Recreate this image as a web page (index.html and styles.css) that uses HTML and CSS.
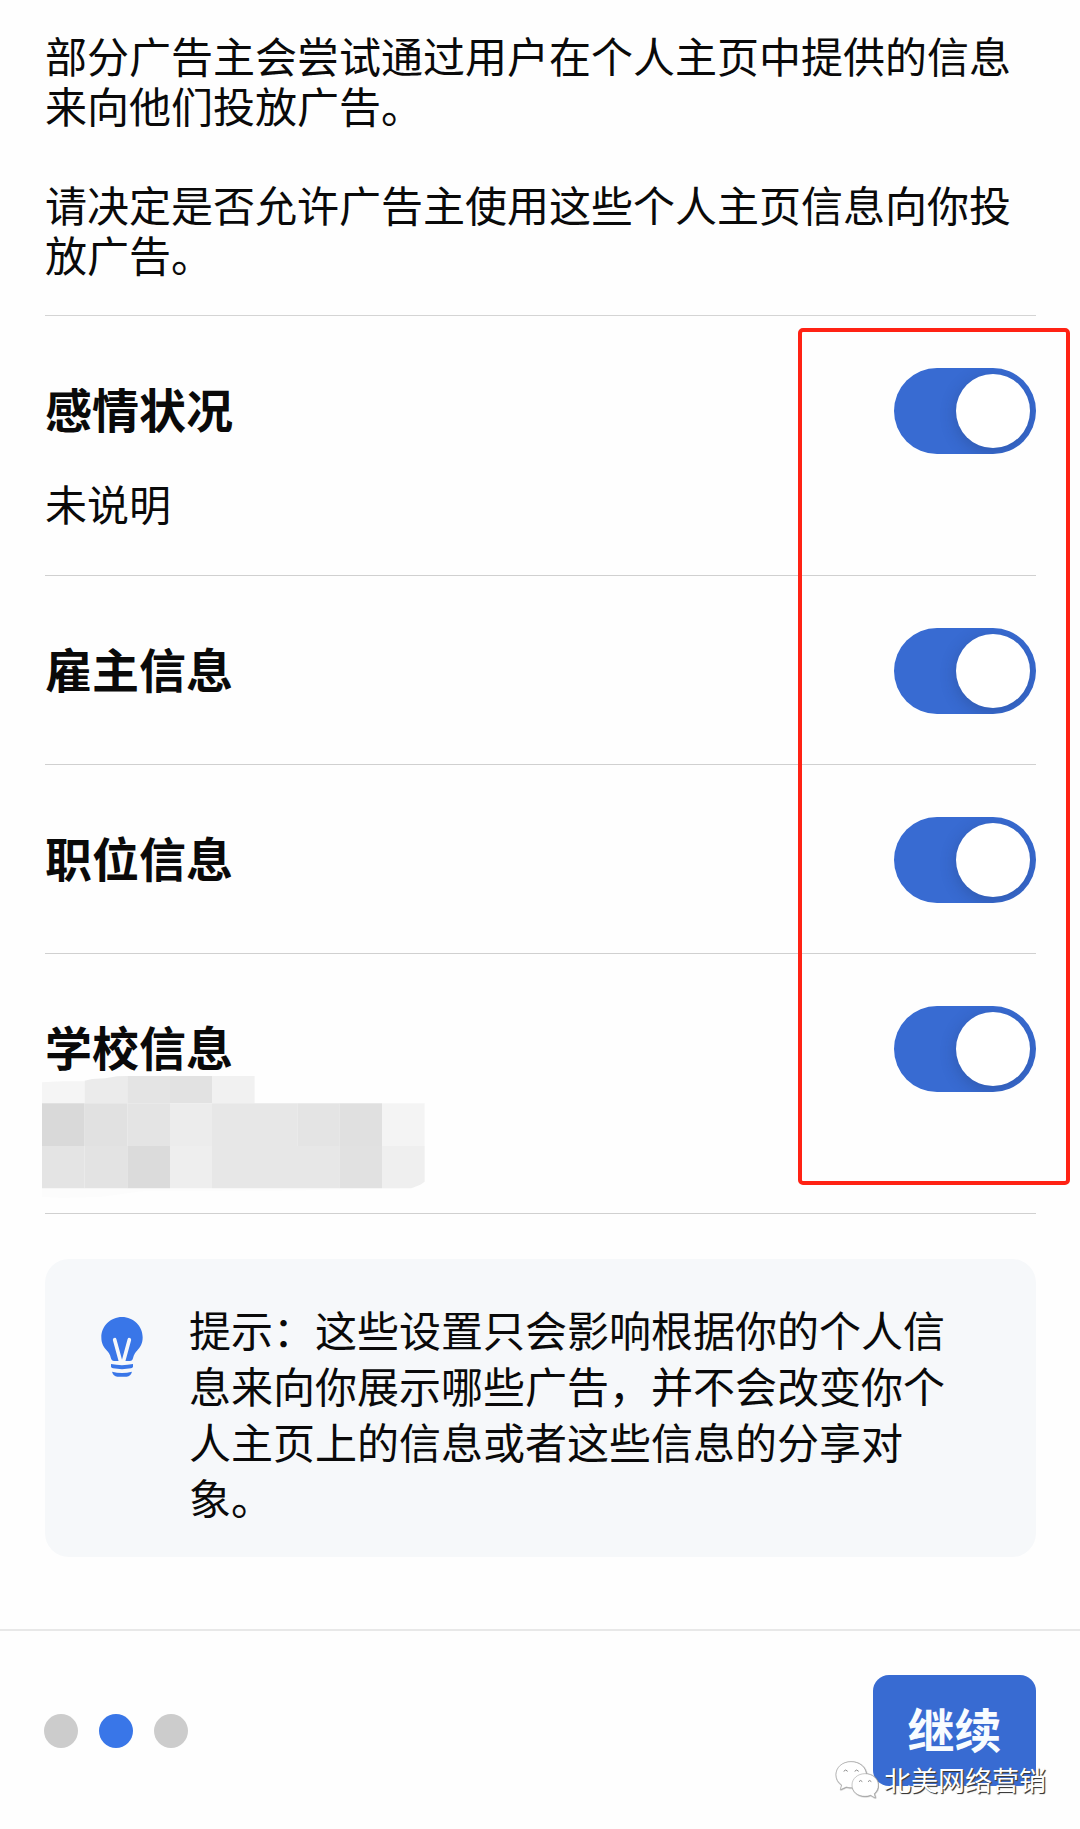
FILE: index.html
```html
<!DOCTYPE html>
<html lang="zh-CN">
<head>
    <meta charset="utf-8">
    <meta name="viewport" content="width=device-width, initial-scale=1">
    <title>广告设置</title>
    <link rel="stylesheet" href="styles.css">
</head>
<body>

    <main>
        <div class="intro">
            <p>部分广告主会尝试通过用户在个人主页中提供的信息来向他们投放广告。</p>
            <p>请决定是否允许广告主使用这些个人主页信息向你投放广告。</p>
        </div>

        <div class="settings">
            <div class="row row-tall">
                <div class="row-text">
                    <label class="row-title" for="relationship">感情状况</label>
                    <p class="row-value">未说明</p>
                </div>
                <input type="checkbox" class="switch" id="relationship" checked>
            </div>
            <div class="row">
                <label class="row-title" for="employer">雇主信息</label>
                <input type="checkbox" class="switch" id="employer" checked>
            </div>
            <div class="row">
                <label class="row-title" for="job">职位信息</label>
                <input type="checkbox" class="switch" id="job" checked>
            </div>
            <div class="row row-tall">
                <label class="row-title" for="school">学校信息</label>
                <input type="checkbox" class="switch" id="school" checked>
                <!-- pixelated school name -->
                <svg class="mosaic" viewBox="0 0 1152 366" aria-hidden="true">
                    <path fill="#fcfcfc" d="M0 336H1110L720 344L300 346L180 362L60 366L0 362z"/>
                    <path fill="#f5f5f5" d="M0 19L60 16L128 16V82H0z"/>
                    <path fill="#ebebeb" d="M128 14L150 9L190 7L225 1L256 0V82H128z"/>
                    <path fill="#e4e4e4" d="M256 0H384V82H256z"/>
                    <path fill="#e2e2e2" d="M384 0H510V82H384z"/>
                    <path fill="#f1f1f1" d="M510 0H638V82H510z"/>
                    <path fill="#d9d9d9" d="M0 82H128V210H0z"/>
                    <path fill="#e1e1e1" d="M128 82H256V210H128z"/>
                    <path fill="#e4e4e4" d="M256 82H384V210H256z"/>
                    <path fill="#ececec" d="M384 82H510V210H384z"/>
                    <path fill="#e7e7e7" d="M510 82H766V210H510z"/>
                    <path fill="#e4e4e4" d="M766 82H892V210H766z"/>
                    <path fill="#e0e0e0" d="M892 82H1020V210H892z"/>
                    <path fill="#f4f4f4" d="M1020 82H1148V210H1020z"/>
                    <path fill="#e4e4e4" d="M0 210H128V337H0z"/>
                    <path fill="#e3e3e3" d="M128 210H256V337H128z"/>
                    <path fill="#dbdbdb" d="M256 210H384V337H256z"/>
                    <path fill="#eeeeee" d="M384 210H510V337H384z"/>
                    <path fill="#e7e7e7" d="M510 210H892V337H510z"/>
                    <path fill="#e1e1e1" d="M892 210H1020V337H892z"/>
                    <path fill="#efefef" d="M1020 210H1148V317L1135 326L1108 337H1020z"/>
                </svg>
            </div>
            <div class="highlight"></div>
        </div>

        <div class="tip">
            <svg class="bulb" viewBox="0 0 124 180" aria-hidden="true">
                <path fill="#3976e8" d="M62 0C27 0 0 28 0 61C0 80 7 91 17 101C27 111 28 121 30 127Q32 132 38 132H86Q92 132 94 127C96 121 97 111 107 101C117 91 124 80 124 61C124 28 97 0 62 0z"/>
                <path fill="none" stroke="#f6f8fa" stroke-width="11" stroke-linecap="round" stroke-linejoin="round" d="M40 68L58 134H66L84 68"/>
                <path fill="#3976e8" d="M29 141Q62 148 95 141V149Q94 153 89 154Q62 159 35 154Q30 153 29 149z"/>
                <path fill="#3976e8" d="M32 164Q62 172 92 164Q88 178 76 179H48Q36 178 32 164z"/>
            </svg>
            <p>提示：这些设置只会影响根据你的个人信息来向你展示哪些广告，并不会改变你个人主页上的信息或者这些信息的分享对象。</p>
        </div>
    </main>

    <footer>
        <div class="dots">
            <span class="dot"></span>
            <span class="dot active"></span>
            <span class="dot"></span>
        </div>
        <button type="button" class="continue">继续</button>

        <div class="watermark">
            <svg class="wechat" viewBox="0 0 132 114" aria-hidden="true">
                <g class="wechat-shade">
                    <path d="M48 2C22 2 3 19 3 41C3 54 9 65 20 72L16 86L34 78Q42 81 50 80C76 80 94 64 94 41C94 19 74 2 48 2z"/>
                    <path d="M90 38C68 38 51 53 51 72C51 92 68 106 90 106Q99 106 107 103L121 111L118 98C126 91 130 82 130 72C130 53 112 38 90 38z"/>
                </g>
                <path class="wechat-eye" d="M26 31Q32 23 38 31M59 31Q65 23 71 31M72 62Q77 55 82 62M99 62Q104 55 109 62"/>
            </svg>
            <span>北美网络营销</span>
        </div>
    </footer>

</body>
</html>
```

FILE: styles.css
```css
* {
    box-sizing: border-box;
}

body {
    margin: 0;
    background-color: #fefefe;
    color: #0a0a0a;
    font-family: "Noto Sans CJK SC", sans-serif;
    font-size: 42px;
    line-height: 50px;
}

p {
    margin: 0;
}

main {
    padding: 30px 44px 72px 45px;
}

.intro {
    display: flex;
    flex-direction: column;
    gap: 49px;
    padding-bottom: 36px;
}

.settings {
    position: relative;
    border-top: 1px solid #d4d4d4;
}

.row {
    position: relative;
    display: flex;
    justify-content: space-between;
    align-items: flex-start;
    min-height: 189px;
    padding: 52px 0 45px;
    border-bottom: 1px solid #d0d0d0;
}

.row-tall {
    min-height: 260px;
}

.row-title {
    display: block;
    font-size: 47px;
    font-weight: 700;
    line-height: 80px;
}

.row-value {
    margin-top: 30px;
}

.switch {
    appearance: none;
    display: flex;
    justify-content: flex-end;
    flex-shrink: 0;
    width: 142px;
    height: 86px;
    margin: 0;
    padding: 6px;
    border-radius: 43px;
    background-color: #386bd2;
    overflow: hidden;
    cursor: pointer;
}

.switch::before {
    content: "";
    width: 74px;
    height: 74px;
    border-radius: 50%;
    background-color: #fff;
    box-shadow: 0 4px 16px rgba(30, 50, 90, 0.3);
}

.switch:not(:checked) {
    justify-content: flex-start;
    background-color: #ccc;
}

.mosaic {
    position: absolute;
    top: 122px;
    left: -3px;
    width: 384px;
    height: 122px;
}

/* red frame round the switches */
.highlight {
    position: absolute;
    top: 12px;
    right: -34px;
    bottom: 29px;
    width: 272px;
    border: 4px solid #ff2214;
    border-radius: 5px;
    pointer-events: none;
}

.tip {
    display: flex;
    align-items: flex-start;
    gap: 46px;
    margin-top: 45px;
    padding: 42px 64px 32px 56px;
    border-radius: 24px;
    background-color: #f6f8fa;
    line-height: 56px;
}

.bulb {
    flex-shrink: 0;
    width: 42px;
    height: 60px;
    margin-top: 16px;
}

footer {
    position: relative;
    display: flex;
    justify-content: space-between;
    align-items: center;
    padding: 44px;
    border-top: 2px solid #e8e8e8;
}

.dots {
    display: flex;
    gap: 21px;
}

.dot {
    width: 34px;
    height: 34px;
    border-radius: 50%;
    background-color: #ccc;
}

.dot.active {
    background-color: #3976e8;
}

.continue {
    min-width: 163px;
    padding: 27px 34px 32px;
    border: none;
    border-radius: 16px;
    background-color: #386bd2;
    color: #f8fcff;
    font-family: inherit;
    font-size: 47px;
    font-weight: 700;
    line-height: 52px;
    cursor: pointer;
}

.watermark {
    position: absolute;
    right: 34px;
    bottom: 31px;
    display: flex;
    align-items: center;
    gap: 5px;
    color: #fff;
    font-size: 27px;
    line-height: 38px;
    text-shadow: 1px 1px 1px #333, 1px 1px 0 #777;
    pointer-events: none;
}

.wechat {
    width: 44px;
    height: 38px;
}

.wechat-shade {
    fill: #fff;
    stroke: #aaa;
    stroke-width: 2;
    filter: drop-shadow(1px 1px 1px #777);
}

.wechat-eye {
    fill: none;
    stroke: #888;
    stroke-width: 3;
}
```
